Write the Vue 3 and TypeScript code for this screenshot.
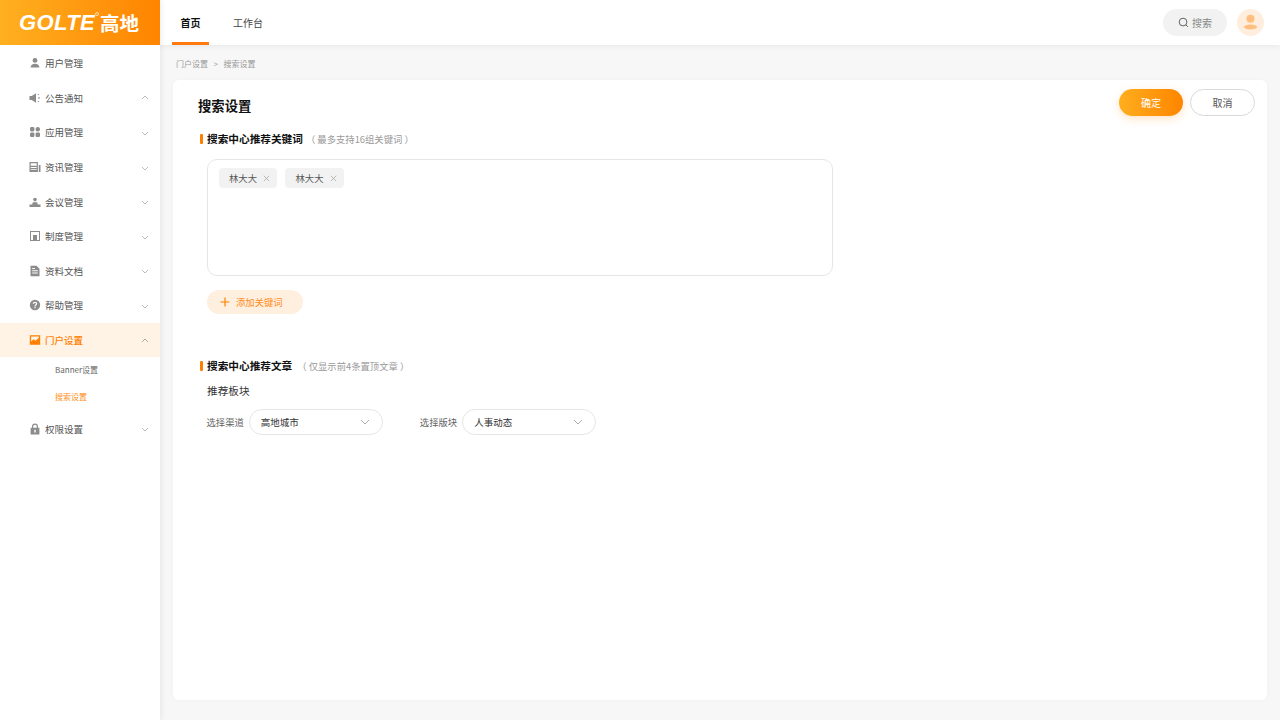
<script setup lang="ts">
interface MenuItem { label: string; icon: string; arrow: 'up' | 'down' | ''; active?: boolean; children?: { label: string; active?: boolean }[] }
const menu: MenuItem[] = [
  { label: '用户管理', icon: 'user', arrow: '' },
  { label: '公告通知', icon: 'horn', arrow: 'up' },
  { label: '应用管理', icon: 'apps', arrow: 'down' },
  { label: '资讯管理', icon: 'news', arrow: 'down' },
  { label: '会议管理', icon: 'meet', arrow: 'down' },
  { label: '制度管理', icon: 'rule', arrow: 'down' },
  { label: '资料文档', icon: 'doc', arrow: 'down' },
  { label: '帮助管理', icon: 'help', arrow: 'down' },
  { label: '门户设置', icon: 'portal', arrow: 'up', active: true, children: [{ label: 'Banner设置' }, { label: '搜索设置', active: true }] },
  { label: '权限设置', icon: 'lock', arrow: 'down' },
]
const tags = ['林大大', '林大大']
</script>

<template>
  <div class="page">
    <aside class="side">
      <div class="logo">
        <span class="logo-en">GOLTE</span><span class="logo-r"></span><span class="logo-cn">高地</span>
      </div>
      <nav class="menu">
        <template v-for="m in menu" :key="m.label">
          <div class="item" :class="{ active: m.active }">
            <svg class="ico" viewBox="0 0 12 12" fill="currentColor">
              <template v-if="m.icon === 'user'">
                <circle cx="6" cy="3.4" r="2.4" />
                <path d="M1.6 10.6c0-2.5 2-3.9 4.4-3.9s4.4 1.4 4.4 3.9z" />
              </template>
              <template v-else-if="m.icon === 'horn'">
                <path d="M0.5 4h2.2L7 1.2v9.6L2.7 8H.5z" />
                <path d="M8.6 2.6l1.4-.8.3.6-1.4.8zM9 5.6h2v.8H9zM8.6 9.4l1.4.8.3-.6-1.4-.8z" />
              </template>
              <template v-else-if="m.icon === 'apps'">
                <rect x="1" y="1" width="4.4" height="4.4" rx="1.4" />
                <rect x="6.6" y="1" width="4.4" height="4.4" rx="2.2" />
                <rect x="1" y="6.6" width="4.4" height="4.4" rx="1.2" />
                <rect x="6.6" y="6.6" width="4.4" height="4.4" rx="1.2" />
              </template>
              <template v-else-if="m.icon === 'news'">
                <path fill-rule="evenodd" d="M.5 1h8.4v10H.5zM1.7 2.2v2.6h6V2.2zM1.7 6v.9h6V6zM1.7 8.2v.9h6v-.9z" />
                <rect x="9.8" y="4" width="1.7" height="7" />
              </template>
              <template v-else-if="m.icon === 'meet'">
                <circle cx="6" cy="3.6" r="1.8" />
                <path d="M3.8 6.2h4.4l.6 2.2H11.5V11H.5V8.4h2.7z" />
              </template>
              <template v-else-if="m.icon === 'rule'">
                <path fill-rule="evenodd" d="M1 1h10v10H1zM2 2v8h2V5h4v5h2V2z" />
              </template>
              <template v-else-if="m.icon === 'doc'">
                <path fill-rule="evenodd" d="M1.5.7h6l3 3v7.6h-9zM3.2 5.2v1h5.6v-1zM3.2 7.6v1h5.6v-1zM3.2 3v1h2.8V3z" />
              </template>
              <template v-else-if="m.icon === 'help'">
                <path fill-rule="evenodd" d="M6 .8a5.2 5.2 0 1 1 0 10.4A5.2 5.2 0 0 1 6 .8zM5.4 8.1v1.2h1.2V8.1zM6 2.8c-1.3 0-2.2.8-2.3 2h1.2c.1-.5.5-.9 1.1-.9.6 0 1 .4 1 .9 0 .9-1.6 1-1.6 2.7h1.2c0-1.2 1.6-1.4 1.6-2.8 0-1.1-.9-1.9-2.2-1.9z" />
              </template>
              <template v-else-if="m.icon === 'portal'">
                <path fill-rule="evenodd" d="M.8 1.2h10.4v9.6H.8zM2.1 2.5v5l2.6-2.2 1.9 1.4 3.3-3v-1.2z" />
              </template>
              <template v-else-if="m.icon === 'lock'">
                <path fill-rule="evenodd" d="M3 4.8V3.6a3 3 0 0 1 6 0v1.2h1.4v6.6H1.6V4.8zM4.2 4.8h3.6V3.6a1.8 1.8 0 0 0-3.6 0zM5.3 6.8v2.6h1.4V6.8z" />
              </template>
            </svg>
            <span class="label">{{ m.label }}</span>
            <svg v-if="m.arrow" class="arrow" :class="m.arrow" viewBox="0 0 8 5" fill="none" stroke="currentColor" stroke-width=".8">
              <path v-if="m.arrow === 'down'" d="M1 1l3 3 3-3" />
              <path v-else d="M1 4l3-3 3 3" />
            </svg>
          </div>
          <div v-for="c in m.children" :key="c.label" class="sub" :class="{ active: c.active }">{{ c.label }}</div>
        </template>
      </nav>
    </aside>

    <div class="right">
      <header class="top">
        <div class="tabs">
          <div class="tab on">首页</div>
          <div class="tab">工作台</div>
        </div>
        <div class="tools">
          <div class="search">
            <svg class="search-ico" viewBox="0 0 12 12" fill="none" stroke="#555" stroke-width="1">
              <circle cx="5.5" cy="5.5" r="4.2" />
              <path d="M8.6 8.6l2.2 2.2" />
            </svg>
            <span>搜索</span>
          </div>
          <div class="avatar">
            <svg viewBox="0 0 27 27" width="27" height="27" fill="#ffbf80">
              <circle cx="13.5" cy="9.8" r="4" />
              <ellipse cx="13.5" cy="18" rx="6.5" ry="2.6" />
            </svg>
          </div>
        </div>
      </header>

      <main class="main">
        <div class="crumb"><span>门户设置</span><span class="sep">&gt;</span><span>搜索设置</span></div>
        <section class="card">
          <div class="card-head">
            <h1>搜索设置</h1>
            <div class="btns">
              <button class="btn ok">确定</button>
              <button class="btn cancel">取消</button>
            </div>
          </div>

          <div class="sec-title first">
            <i></i><b>搜索中心推荐关键词</b><span>（ 最多支持16组关键词 ）</span>
          </div>
          <div class="tagbox">
            <div v-for="(t, i) in tags" :key="i" class="tag">
              <span>{{ t }}</span>
              <svg viewBox="0 0 7 7" width="7" height="7" fill="none" stroke="#a0a0a0" stroke-width=".7"><path d="M.8.8l5.4 5.4M6.2.8L.8 6.2" /></svg>
            </div>
          </div>
          <button class="add">
            <svg viewBox="0 0 10 10" width="10" height="10" fill="none" stroke="#ff8000" stroke-width="1.2"><path d="M5 .5v9M.5 5h9" /></svg>
            <span>添加关键词</span>
          </button>

          <div class="sec-title second">
            <i></i><b>搜索中心推荐文章</b><span>（ 仅显示前4条置顶文章 ）</span>
          </div>
          <div class="block-title">推荐板块</div>
          <div class="filters">
            <div class="filter">
              <label>选择渠道</label>
              <div class="select"><span>高地城市</span>
                <svg viewBox="0 0 10 6" width="10" height="6" fill="none" stroke="#999" stroke-width=".8"><path d="M1 1l4 4 4-4" /></svg>
              </div>
            </div>
            <div class="filter">
              <label>选择版块</label>
              <div class="select"><span>人事动态</span>
                <svg viewBox="0 0 10 6" width="10" height="6" fill="none" stroke="#999" stroke-width=".8"><path d="M1 1l4 4 4-4" /></svg>
              </div>
            </div>
          </div>
        </section>
      </main>
    </div>
  </div>
</template>

<style>
html, body { margin: 0; padding: 0; background: #f7f7f7; }
</style>

<style scoped>
.page {
  display: flex;
  width: 1280px;
  height: 720px;
  overflow: hidden;
  font-family: "Noto Sans CJK SC", "Noto Sans", sans-serif;
  color: #333;
}
.side {
  position: relative;
  z-index: 2;
  width: 160px;
  flex: none;
  background: #fff;
  box-shadow: 1px 0 6px rgba(0, 0, 0, 0.08);
}
.logo {
  height: 45px;
  display: flex;
  align-items: center;
  padding-left: 19px;
  box-sizing: border-box;
  background: linear-gradient(90deg, #ffb020 0%, #ff8400 100%);
  color: #fff;
  position: relative;
}
.logo-en {
  font-family: "Liberation Sans", sans-serif;
  font-weight: 700;
  font-style: italic;
  font-size: 22px;
  letter-spacing: 0.4px;
  line-height: 1;
  width: 77px;
  white-space: nowrap;
}
.logo-r {
  position: absolute;
  left: 95px;
  top: 12px;
  width: 4px;
  height: 4px;
  border: 0.6px solid #ffe0b0;
  border-radius: 50%;
  box-sizing: border-box;
}
.logo-cn {
  margin-left: 4px;
  font-size: 19.5px;
  font-weight: 700;
  line-height: 1;
}
.menu { padding-top: 1px; }
.item {
  height: 34.6px;
  display: flex;
  align-items: center;
  padding-left: 28.5px;
  padding-right: 11.5px;
  font-size: 9.5px;
  color: #555;
}
.item .ico { width: 12px; height: 12px; color: #8c8c8c; flex: none; }
.item .label { margin-left: 4.5px; flex: 1; white-space: nowrap; }
.item .arrow { width: 8px; height: 5px; color: #aaa; flex: none; }
.item .arrow.down { margin-top: 2px; }
.item.active { background: #fff3e6; color: #ff8000; font-weight: 500; }
.item.active .ico { color: #ff8000; }
.item.active .arrow { color: #999; }
.sub {
  height: 27px;
  line-height: 26px;
  padding-left: 55px;
  font-size: 8px;
  color: #666;
}
.sub.active { color: #ff9020; }
.right { flex: 1; min-width: 0; display: flex; flex-direction: column; }
.top {
  position: relative;
  z-index: 1;
  height: 45px;
  flex: none;
  display: flex;
  align-items: stretch;
  justify-content: space-between;
  background: #fff;
  box-shadow: 0 1px 6px rgba(0, 0, 0, 0.07);
  padding: 0 16px 0 12px;
}
.tabs { display: flex; gap: 24px; }
.tab {
  position: relative;
  font-size: 10px;
  line-height: 45px;
  height: 45px;
  color: #444;
}
.tab.on {
  width: 37px;
  text-align: center;
  color: #111;
  font-weight: 700;
}
.tab.on::after {
  content: "";
  position: absolute;
  left: 0;
  right: 0;
  bottom: 0;
  height: 3px;
  background: #ff7a10;
}
.tools { display: flex; align-items: center; gap: 10px; }
.search {
  width: 64px;
  height: 27px;
  border-radius: 14px;
  background: #f2f2f2;
  display: flex;
  align-items: center;
  justify-content: center;
  gap: 3px;
  font-size: 10px;
  color: #888;
}
.search-ico { width: 11px; height: 11px; }
.avatar {
  width: 27px;
  height: 27px;
  border-radius: 50%;
  background: #ffeedd;
  overflow: hidden;
}
.avatar svg { display: block; }
.main {
  flex: 1;
  min-height: 0;
  background: #f7f7f7;
  padding: 0 13px 20px 13px;
  display: flex;
  flex-direction: column;
}
.crumb {
  height: 35px;
  flex: none;
  display: flex;
  align-items: center;
  padding-left: 3px;
  padding-top: 1px;
  box-sizing: border-box;
  font-size: 8px;
  color: #999;
}
.crumb .sep { margin: 0 5.5px; }
.card {
  flex: 1;
  background: #fff;
  border-radius: 6px;
  box-shadow: 0 0 4px rgba(0, 0, 0, 0.03);
  padding: 9px 12px 0 25px;
  box-sizing: border-box;
}
.card-head { display: flex; justify-content: space-between; align-items: flex-start; }
.card-head h1 {
  margin: 7px 0 0;
  font-size: 13.33px;
  line-height: 20px;
  font-weight: 700;
  color: #111;
}
.btns { display: flex; gap: 7px; }
.btn {
  width: 65px;
  height: 27px;
  border-radius: 14px;
  font: inherit;
  font-size: 10px;
  padding: 0;
  box-sizing: border-box;
}
.btn.ok {
  width: 64px;
  border: 0;
  color: #fff;
  background: linear-gradient(90deg, #ffae1e 0%, #ff8500 100%);
  box-shadow: 0 3px 8px rgba(255, 150, 30, 0.25);
}
.btn.cancel { background: #fff; border: 1px solid #d9d9d9; color: #555; }
.sec-title {
  display: flex;
  align-items: center;
  height: 16px;
  padding-left: 2px;
}
.sec-title.first { margin-top: 14.5px; }
.sec-title.second { margin-top: 43.5px; }
.sec-title i { width: 3px; height: 10px; border-radius: 1px; background: #ff8000; margin-right: 4px; }
.sec-title b { font-size: 10.67px; font-weight: 700; color: #111; }
.sec-title span { font-size: 9.33px; color: #999; margin-left: 3px; white-space: nowrap; }
.sec-title.second span { margin-left: 5px; }
.tagbox {
  margin: 12.5px 0 0 9px;
  width: 626px;
  height: 117px;
  box-sizing: border-box;
  border: 1px solid #e6e6e6;
  border-radius: 10px;
  padding: 8px 11px;
  display: flex;
  align-items: flex-start;
  gap: 8px;
}
.tag {
  height: 20px;
  padding: 0 7px 0 10px;
  border-radius: 4px;
  background: #f2f2f2;
  display: flex;
  align-items: center;
  gap: 6.5px;
  font-size: 9.33px;
  color: #555;
}
.add {
  margin: 14px 0 0 9px;
  width: 96px;
  height: 24px;
  border: 0;
  border-radius: 12px;
  background: #ffefdf;
  display: flex;
  align-items: center;
  padding: 0 0 0 13px;
  box-sizing: border-box;
  gap: 6px;
  font: inherit;
  font-size: 9.33px;
  color: #ff8c1a;
}
.block-title {
  margin: 9.5px 0 0 9px;
  font-size: 10.67px;
  line-height: 16px;
  color: #333;
}
.filters { display: flex; gap: 37px; margin: 10px 0 0 8.5px; }
.filter { display: flex; align-items: center; gap: 5px; }
.filter label { font-size: 9.33px; color: #666; }
.select {
  width: 134px;
  height: 26px;
  box-sizing: border-box;
  border: 1px solid #e6e6e6;
  border-radius: 13px;
  display: flex;
  align-items: center;
  justify-content: space-between;
  padding: 0 12px 0 11px;
  font-size: 9.5px;
  color: #333;
}
</style>
